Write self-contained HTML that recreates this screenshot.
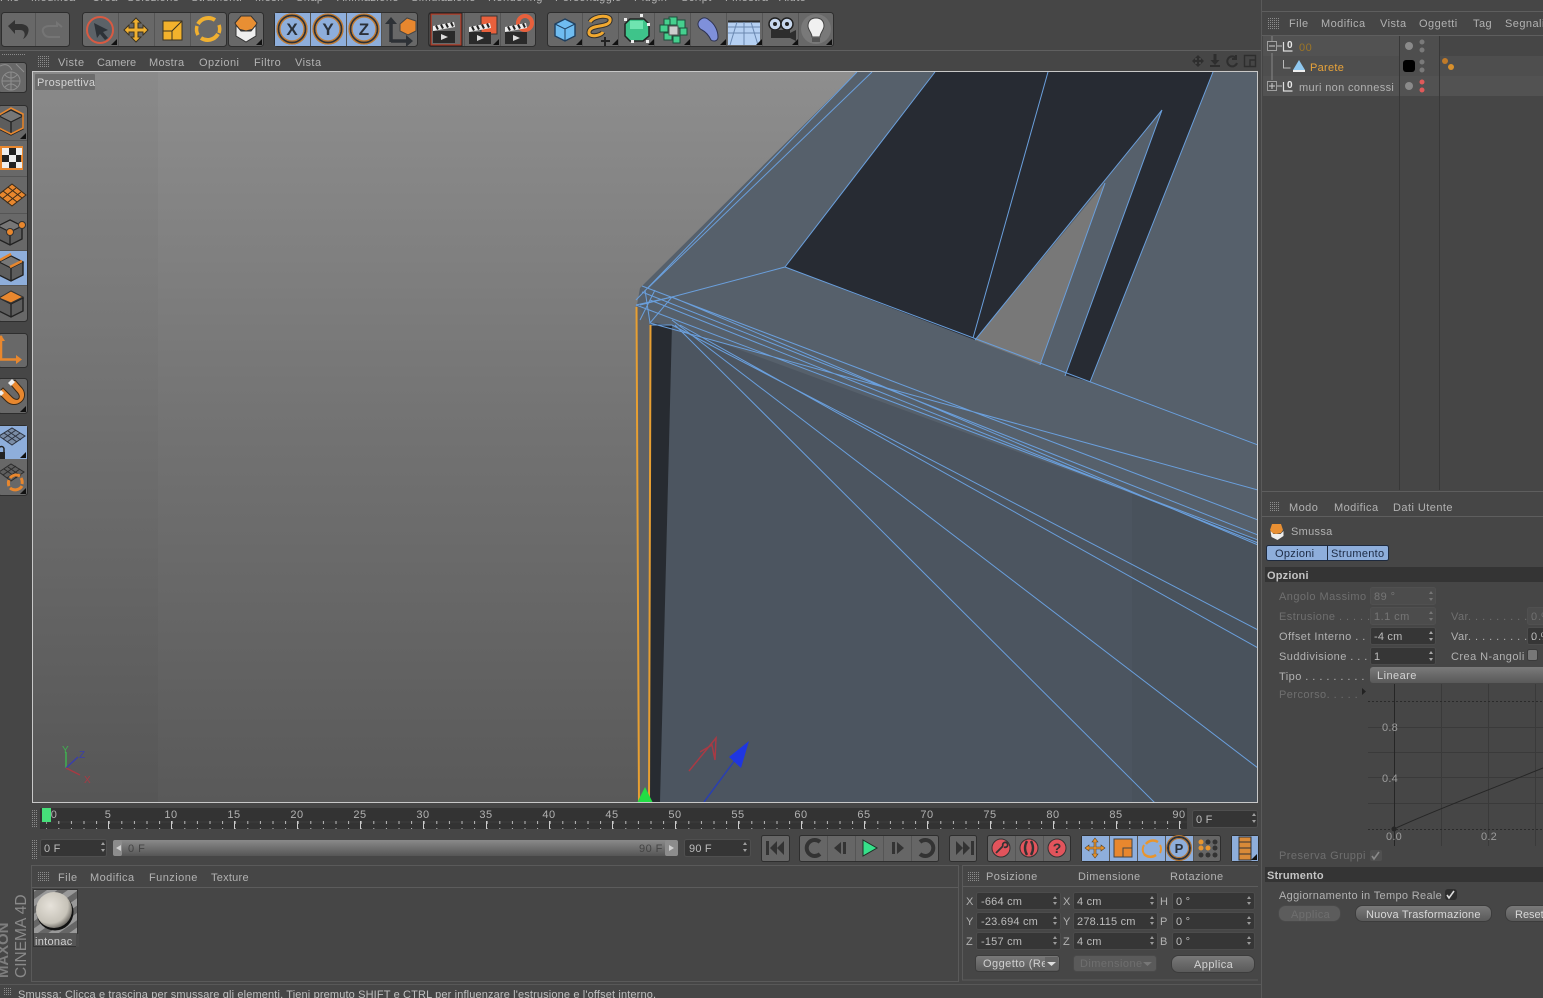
<!DOCTYPE html>
<html><head><meta charset="utf-8"><title>Cinema 4D</title>
<style>
html,body{margin:0;padding:0;background:#464646;overflow:hidden}
svg{display:block;position:absolute;left:0;top:0}
text{font-family:"Liberation Sans",sans-serif;font-size:11px;letter-spacing:.45px;fill:#b2b2b2}
.d{fill:#6f6f6f}
.b{font-weight:bold;fill:#c4c4c4;letter-spacing:.2px}
.v{fill:#bcbcbc;letter-spacing:.2px}
.o{fill:#e8a33a}
.l{fill:#1c2a44;letter-spacing:.3px}
.x{font-weight:bold;font-size:17px;fill:#2b313a;letter-spacing:0;text-anchor:middle}
</style></head><body>
<svg width="1543" height="998" viewBox="0 0 1543 998" xmlns="http://www.w3.org/2000/svg">
<defs>
<linearGradient id="sky" x1="0" y1="0" x2="0" y2="1"><stop offset="0" stop-color="#8e8e8e"/><stop offset=".5" stop-color="#727272"/><stop offset="1" stop-color="#595959"/></linearGradient>
<linearGradient id="sl" x1="0" y1="0" x2="0" y2="1"><stop offset="0" stop-color="#8a8a8a"/><stop offset="1" stop-color="#555"/></linearGradient>
<linearGradient id="btn" x1="0" y1="0" x2="0" y2="1"><stop offset="0" stop-color="#7a7a7a"/><stop offset="1" stop-color="#595959"/></linearGradient>
<radialGradient id="sph" cx=".4" cy=".38" r=".65"><stop offset="0" stop-color="#e6e2da"/><stop offset=".75" stop-color="#c6c2b8"/><stop offset="1" stop-color="#6f6c66"/></radialGradient>
<pattern id="grip" width="2" height="2" patternUnits="userSpaceOnUse"><rect width="1" height="1" fill="#8c8c8c"/></pattern>
<pattern id="t1" x="45.7" width="12.6" height="8" patternUnits="userSpaceOnUse"><rect width="1" height="4" y="4" fill="#bbb"/></pattern>
<pattern id="st" width="12" height="12" patternUnits="userSpaceOnUse" patternTransform="rotate(-35)"><rect width="12" height="12" fill="#666"/><rect width="12" height="6" fill="#999"/></pattern>
<clipPath id="vp"><rect x="33" y="72" width="1224" height="730"/></clipPath>
<g id="tri"><path d="M0-6l-6 6h6z" fill="#111"/></g>
<g id="cube"><path d="M0-12L12-6V7L0 13-12 7V-6z" fill="#5d5d5d" stroke="#222" stroke-width="1.4"/><path d="M-12-6L0 0 12-6 0-12z" fill="#777" stroke="#222" stroke-width="1.2"/><path d="M0 0V13" stroke="#222" stroke-width="1.4"/></g>
<g id="clap"><rect x="-11" y="-1" width="22" height="12" fill="#2a2a2a"/><path d="M-11-6L10-10 11-5-11-1z" fill="#eee"/><path d="M-8-6.500l2 4M-3-7.500l2 4M2-8.500l2 4M7-9.500l2 4" stroke="#222" stroke-width="2"/><path d="M-3 2l7 3-7 3z" fill="#ddd"/></g>
</defs>

<rect width="1543" height="998" fill="#464646"/>

<!-- top menu (clipped) -->
<g>
<text x="0" y="1">File</text><text x="31" y="1">Modifica</text><text x="92" y="1">Crea</text><text x="127" y="1">Selezione</text><text x="191" y="1">Strumenti</text><text x="255" y="1">Mesh</text><text x="296" y="1">Snap</text><text x="337" y="1">Animazione</text><text x="411" y="1">Simulazione</text><text x="488" y="1">Rendering</text><text x="555" y="1">Personaggio</text><text x="634" y="1">Plugin</text><text x="681" y="1">Script</text><text x="725" y="1">Finestra</text><text x="779" y="1">Aiuto</text>
</g>

<!-- top toolbar groups -->
<g stroke="#2e2e2e" fill="#686868">
<rect x="1.500" y="12.500" width="68" height="34" rx="3"/>
<rect x="82.500" y="12.500" width="144" height="34" rx="3"/>
<rect x="228.500" y="12.500" width="35" height="34" rx="3"/>
<rect x="274.500" y="12.500" width="143" height="34" rx="3"/>
<rect x="428.500" y="12.500" width="107" height="34" rx="3"/>
<rect x="547.500" y="12.500" width="286" height="34" rx="3"/>
</g>
<path d="M275 13h106v33H275z" fill="#8eaedb"/>
<path d="M35.500 13v33M118.500 13v33M154.500 13v33M190.500 13v33M310.500 13v33M346.500 13v33M381.500 13v33M464.500 13v33M500.500 13v33M582.500 13v33M618.500 13v33M654.500 13v33M690.500 13v33M726.500 13v33M762.500 13v33M798.500 13v33" stroke="#555" fill="none"/>
<!-- undo/redo -->
<path d="M8 26l7-6v4h5c7 0 10 4 8 9-1 3-3 5-5 6 2-3 2-5 1-7-1-2-3-2-5-2h-4v4z" fill="#333"/>
<path d="M62 27l-5-4v3h-7c-6 0-8 3-7 6 1 3 3 5 6 5h11" fill="none" stroke="#757575" stroke-width="2"/>
<!-- select -->
<circle cx="100" cy="30" r="13" fill="#5c6268" stroke="#d85a42" stroke-width="2"/>
<path d="M94 23l14 7-5 2 5 6-3 2-5-6-3 4z" fill="#2d3238"/>
<use href="#tri" x="117" y="45"/>
<!-- move -->
<path d="M136 18l5 5h-3v5h5v-3l5 5-5 5v-3h-5v5h3l-5 5-5-5h3v-5h-5v3l-5-5 5-5v3h5v-5h-3z" fill="#f0b030" stroke="#3a3222" stroke-width="1"/>
<!-- scale -->
<rect x="163" y="21" width="19" height="19" fill="#f3b22c" stroke="#3a3222"/><path d="M172 40V31L182 21" stroke="#3a3222" fill="none"/><path d="M163 40V31h9" stroke="#3a3222" fill="none"/>
<!-- rotate -->
<path d="M215 20a12 12 0 0 0-17 4M201 38a12 12 0 0 0 17-4" fill="none" stroke="#f0b030" stroke-width="4"/><path d="M197 26a12 12 0 0 0 1 9M219 33a12 12 0 0 0 0-8" fill="none" stroke="#f0b030" stroke-width="3.500"/>
<!-- smussa cube -->
<path d="M235 23l6-7h10l6 7-3 6-8 2-8-2z" fill="#e88f33" stroke="#333"/><path d="M236 25l5 6h10l5-6v11l-10 6-10-6z" fill="#eee" stroke="#333"/>
<use href="#tri" x="262" y="45"/>
<!-- XYZ -->
<g fill="none"><circle cx="292" cy="29" r="14" stroke="#2c3138" stroke-width="3"/><circle cx="292" cy="29" r="15" stroke="#c47c30" stroke-width="1.300"/><circle cx="292" cy="29" r="12" stroke="#c47c30" stroke-width="1.300"/>
<circle cx="328" cy="29" r="14" stroke="#2c3138" stroke-width="3"/><circle cx="328" cy="29" r="15" stroke="#c47c30" stroke-width="1.300"/><circle cx="328" cy="29" r="12" stroke="#c47c30" stroke-width="1.300"/>
<circle cx="364" cy="29" r="14" stroke="#2c3138" stroke-width="3"/><circle cx="364" cy="29" r="15" stroke="#c47c30" stroke-width="1.300"/><circle cx="364" cy="29" r="12" stroke="#c47c30" stroke-width="1.300"/></g>
<text x="292" y="35" class="x">X</text><text x="328" y="35" class="x">Y</text><text x="364" y="35" class="x">Z</text>
<!-- coord -->
<path d="M391 42V21M391 41h20" stroke="#2d3136" stroke-width="3.500" fill="none"/><path d="M385 24l6-7 6 7zM406 35l7 6-7 6z" fill="#2d3136"/><path d="M400 24l7-6 9 3v10l-8 4-8-4z" fill="#e8872e" stroke="#444"/>
<!-- clappers -->
<rect x="431" y="14" width="30" height="31" fill="none" stroke="#b03a25" stroke-width="1.500"/><rect x="430" y="13" width="32" height="33" fill="none" stroke="#222"/>
<use href="#clap" x="444" y="32"/>
<rect x="481" y="16" width="16" height="18" fill="#e8603c" stroke="#333"/><use href="#clap" x="480" y="33"/><use href="#tri" x="499" y="45"/>
<circle cx="525" cy="23" r="7" fill="none" stroke="#e8603c" stroke-width="4"/><use href="#clap" x="516" y="33"/>
<!-- blue cube -->
<path d="M565 19l10 5v12l-10 5-10-5V24z" fill="#6fbcf0" stroke="#1f3f5f" stroke-width="1.400"/><path d="M555 24l10 5 10-5M565 29v12" stroke="#1f3f5f" fill="none"/>
<use href="#tri" x="582" y="45"/>
<!-- spline -->
<path d="M590 22c4-7 22-8 20-1-2 7-20 3-21 11-1 6 12 4 14 0" fill="none" stroke="#2f2f2f" stroke-width="5"/><path d="M590 22c4-7 22-8 20-1-2 7-20 3-21 11-1 6 12 4 14 0" fill="none" stroke="#f0a830" stroke-width="3"/><path d="M601 41h9M605 37v9" stroke="#222" stroke-width="2"/>
<use href="#tri" x="618" y="45"/>
<!-- nurbs cube -->
<path d="M630 19h14l5 5v12l-6 5h-13l-5-5V24z" fill="#3ec48a" stroke="#222" stroke-width="1.500"/><path d="M630 21h13v8h-13z" fill="#6fe4b0"/><path d="M624 18h3v3h-3zM640 14h3v3h-3zM647 23h3v3h-3zM631 40h3v3h-3zM646 40h3v3h-3z" fill="#eee"/>
<use href="#tri" x="654" y="45"/>
<!-- flower -->
<g fill="#45d08e" stroke="#1d4d3a"><rect x="669" y="17" width="8" height="8"/><rect x="677" y="20" width="8" height="8"/><rect x="680" y="28" width="7" height="7"/><rect x="673" y="36" width="7" height="7"/><rect x="664" y="33" width="8" height="7"/><rect x="660" y="25" width="8" height="7"/><rect x="664" y="19" width="6" height="6"/></g><rect x="669" y="26" width="9" height="9" fill="#ccc" stroke="#555"/>
<use href="#tri" x="690" y="45"/>
<!-- nurb blue -->
<path d="M699 21c3-4 7-4 10-1 6 4 9 11 9 17 0 4-4 5-7 3-2-4-5-8-9-10-4-2-5-6-3-9z" fill="#7f90da" stroke="#2e3350"/>
<use href="#tri" x="726" y="45"/>
<!-- floor -->
<rect x="728" y="22" width="32" height="23" fill="#b5d0f2"/><path d="M728 21.500h32" stroke="#2c2c2c" stroke-width="2"/><path d="M728 27h32M728 33h32M744 22v23M737 22l-7 23M751 22l7 23" stroke="#6a88b0" fill="none"/>
<use href="#tri" x="762" y="45"/>
<!-- camera -->
<circle cx="775" cy="24" r="6" fill="#c8d8ee" stroke="#222" stroke-width="1.500"/><circle cx="787" cy="24" r="6" fill="#c8d8ee" stroke="#222" stroke-width="1.500"/><circle cx="775" cy="24" r="2" fill="#222"/><circle cx="787" cy="24" r="2" fill="#222"/><path d="M771 30h19v8h-19z" fill="#2d2d2d"/><path d="M790 33l6-3v11l-6-3z" fill="#2d2d2d"/>
<use href="#tri" x="798" y="45"/>
<!-- bulb -->
<circle cx="816" cy="29" r="15" fill="#8a8a8a" opacity=".5"/><path d="M816 18c6 0 8 4 8 8 0 4-4 7-4 11h-8c0-4-4-7-4-11 0-4 2-8 8-8z" fill="#f0f0f0" stroke="#444"/><path d="M812 38h8v4h-8z" fill="#555"/>
<use href="#tri" x="832" y="45"/>

<!-- separators -->
<path d="M0 50.500h1262" stroke="#606060"/>
<rect x="1" y="53" width="24" height="3" fill="url(#grip)"/>

<!-- left toolbar -->
<g stroke="#2e2e2e" fill="#686868">
<rect x="-2" y="62.500" width="28.500" height="30" rx="3"/>
<rect x="-2" y="105.500" width="29.500" height="216" rx="3"/>
<rect x="-2" y="333.500" width="29.500" height="34" rx="3"/>
<rect x="-2" y="378.500" width="29.500" height="35" rx="3"/>
<rect x="-2" y="425.500" width="29.500" height="70" rx="3"/>
</g>
<rect x="0" y="250" width="27" height="35" fill="#8eaedb"/><rect x="0" y="426" width="27" height="33" fill="#8eaedb"/>
<path d="M0 140.500h27M0 176.500h27M0 213.500h27M0 250.500h27M0 285.500h27" stroke="#555"/>
<!-- globe dim -->
<g fill="none" stroke="#8e8e8e"><circle cx="11" cy="81" r="9"/><path d="M2 81h18M11 72v18M5 75q6 6 12 0M5 87q6-6 12 0"/><path d="M0 66q8-4 12 4M16 64l8 8" /></g>
<!-- orange outlined cube -->
<use href="#cube" x="11" y="122"/><path d="M-1 115L11 108l12 6v14l-12 6-12-6" fill="none" stroke="#e8872e" stroke-width="1.600"/><use href="#tri" x="26" y="139"/>
<!-- checker -->
<rect x="1" y="147" width="21" height="22" fill="#222" stroke="#e8872e" stroke-width="2"/><path d="M2 148h7v7H2zM16 148h6v7h-6zM9 155h7v7H9zM2 162h7v6H2zM16 162h6v6h-6z" fill="#eee"/>
<!-- orange grid -->
<path d="M-2 195l14-11 14 11-14 11z" fill="#e8872e" stroke="#3a2a18"/><path d="M3 191l14 11M8 187l14 11M2 199l14-11M7 203l14-11" stroke="#3a2a18"/>
<!-- point cube -->
<use href="#cube" x="10" y="232"/><circle cx="10" cy="232" r="3.500" fill="#e8872e" stroke="#333"/><circle cx="22" cy="225" r="3.500" fill="#e8872e" stroke="#333"/>
<!-- edge cube -->
<use href="#cube" x="11" y="268"/><path d="M0 260l11-6M10 267l12-6" stroke="#e8872e" stroke-width="2.500"/>
<!-- face cube -->
<use href="#cube" x="11" y="304"/><path d="M-1 298L11 291l12 6-12 6z" fill="#e8872e" stroke="#333"/>
<!-- axes -->
<path d="M1 336v24M0 359.500h18" stroke="#e8872e" stroke-width="2.500" fill="none"/><path d="M16 355l6 4.500-6 4.500z" fill="#e8872e"/><path d="M-3 341l4-6 4 6z" fill="#e8872e"/>
<!-- magnet -->
<path d="M3 388l9 9c3 3 6 3 7 1 1-2 0-4-3-7l-6-7 5-4 7 8c4 5 3 11-1 14-5 4-11 3-15-1l-8-8z" fill="#e8872e" stroke="#3a2a18"/><path d="M8 383l4-4 3 3-4 4zM-2 393l3-3 3 3-3 3z" fill="#eee"/>
<use href="#tri" x="26" y="412"/>
<!-- grid lock -->
<path d="M-1 436l13-8 13 8-13 9z" fill="#7a8ca6" stroke="#2c3340"/><path d="M4 433l13 9M8 431l13 9M3 439l13-9M7 442l13-9" stroke="#2c3340"/><path d="M-2 452h7v7h-7z" fill="#222"/><path d="M-1 452v-3a2.500 2.500 0 0 1 5 0v3" fill="none" stroke="#222" stroke-width="1.500"/>
<use href="#tri" x="26" y="458"/>
<!-- grid rotate -->
<path d="M-1 472l12-8 13 8-13 9z" fill="#5e5e5e" stroke="#2c2c2c"/><path d="M4 469l13 9M8 467l13 9M3 475l13-9M7 478l13-9" stroke="#2c2c2c"/>
<path d="M20 476a8 8 0 0 0-10 2M10 488a8 8 0 0 0 12-2M9 480a8 8 0 0 0 0 6M22 484a8 8 0 0 0-1-6" fill="none" stroke="#e8872e" stroke-width="3"/>
<use href="#tri" x="26" y="494"/>

<!-- viewport header -->
<rect x="38" y="56" width="12" height="11" fill="url(#grip)"/>
<text x="58" y="66">Viste</text><text x="97" y="66" style="letter-spacing:0">Camere</text><text x="149" y="66" style="letter-spacing:.3px">Mostra</text><text x="199" y="66">Opzioni</text><text x="254" y="66">Filtro</text><text x="295" y="66">Vista</text>
<g fill="#2e2e2e"><path d="M1198 55l3 3h-2v2h2v-2l3 3-3 3v-2h-2v2h2l-3 3-3-3h2v-2h-2v2l-3-3 3-3v2h2v-2h-2z"/><path d="M1213.500 54h3v6h3l-4.500 5-4.500-5h3zM1210 65h10v2h-10z"/></g><path d="M1236 58a5 5 0 1 0 1 5M1236 55v4h-4" fill="none" stroke="#2e2e2e" stroke-width="2"/><path d="M1244.500 55.500h11v11h-11zM1250 66v-6h6" fill="none" stroke="#2e2e2e" stroke-width="1.400"/>

<!-- viewport -->
<rect x="32" y="71" width="1226" height="732" fill="#c8c8c8"/>
<g clip-path="url(#vp)">
<rect x="33" y="72" width="1224" height="730" fill="url(#sky)"/>
<rect x="33" y="72" width="125" height="730" fill="#000" opacity=".025"/>
<!-- faces -->
<polygon points="857,72 1258,72 1258,803 640,803 637,305 640,288" fill="#56606b"/>
<polygon points="672,325 1258,540 1258,803 660,803" fill="#4c5560"/>
<polygon points="935,72 1213,72 1090,382 1065,375 1162,110 975,340 785,267" fill="#272b33"/>
<polygon points="975,340 1105,183 1040,365" fill="#787878"/>
<polygon points="1105,183 1162,110 1065,376 1040,365" fill="#56606b"/>
<polygon points="650,323 672,325 660,803 650,803" fill="#272b31"/>
<polygon points="637,305 650,323 650,803 640,803" fill="#606265"/>
<polygon points="1132,494 1258,540 1258,803 1132,803" fill="#000" opacity=".035"/>
<!-- wire -->
<g stroke="#6a9fdc" stroke-width="1" fill="none">
<path d="M857 72L636 300M872 72L648 288M935 72L785 267M785 267L672 297L636 305"/>
<path d="M785 267L1258 445M1048 72L973 338M1162 110L975 340M1105 183L1040 365M1162 110L1065 376M1213 72L1090 382"/>
<path d="M642 286L1258 520M642 292L1258 535M650 300L1258 543M636 305L1258 540M650 323L1258 490M672 297L1258 545"/>
<path d="M645 290L650 323L672 297L640 305M655 290L640 320"/>
<path d="M672 325L1258 630M680 325L1258 648M672 320L1258 768M675 325L1155 803"/>
<path d="M650 325H672"/>
</g>
<path d="M636.500 307L639 803M650.500 325L649 803" stroke="#e79f32" stroke-width="2" fill="none"/>
<!-- gizmos -->
<path d="M689 771L716 738 715 760 712 745 700 752" fill="none" stroke="#a83a44" stroke-width="1.500"/>
<path d="M704 802L738 756" stroke="#2a3fb0" stroke-width="1.500"/><path d="M749 741L741 768 729 757z" fill="#1f36e0"/>
<path d="M645 787L653 803H637z" fill="#22dd44"/>
<path d="M66 768V752" stroke="#40b050" stroke-width="1.500"/><path d="M66 768L78 757" stroke="#3a3fa8" stroke-width="1.500"/><path d="M66 768L80 775" stroke="#a83a44" stroke-width="1.500"/>
<text x="62" y="753" style="fill:#40b050;font-size:10px;letter-spacing:0">Y</text><text x="79" y="758" style="fill:#3a3fa8;font-size:10px;letter-spacing:0">Z</text><text x="84" y="783" style="fill:#a83a44;font-size:10px;letter-spacing:0">X</text>
</g>
<rect x="35" y="74" width="60" height="16" rx="1" fill="#6c6c6c"/>
<text x="37" y="86" style="fill:#d4d4d4;letter-spacing:.3px">Prospettiva</text>

<!-- timeline -->
<rect x="32" y="809" width="5" height="19" fill="url(#grip)"/>
<rect x="40" y="808" width="1147" height="21" fill="#333"/>
<path d="M40 822h1147" stroke="#3c3c3c"/>
<rect x="46" y="821" width="1140" height="8" fill="url(#t1)"/>
<path d="M108.500 821v8M171.500 821v8M234.500 821v8M297.500 821v8M360.500 821v8M423.500 821v8M486.500 821v8M549.500 821v8M612.500 821v8M675.500 821v8M738.500 821v8M801.500 821v8M864.500 821v8M927.500 821v8M990.500 821v8M1053.500 821v8M1116.500 821v8M1179.500 821v8" stroke="#ccc"/>
<rect x="42" y="808" width="9" height="14" fill="#46e07a"/>
<g>
<text x="54" y="818" text-anchor="middle">0</text><text x="108" y="818" text-anchor="middle">5</text><text x="171" y="818" text-anchor="middle">10</text><text x="234" y="818" text-anchor="middle">15</text><text x="297" y="818" text-anchor="middle">20</text><text x="360" y="818" text-anchor="middle">25</text><text x="423" y="818" text-anchor="middle">30</text><text x="486" y="818" text-anchor="middle">35</text><text x="549" y="818" text-anchor="middle">40</text><text x="612" y="818" text-anchor="middle">45</text><text x="675" y="818" text-anchor="middle">50</text><text x="738" y="818" text-anchor="middle">55</text><text x="801" y="818" text-anchor="middle">60</text><text x="864" y="818" text-anchor="middle">65</text><text x="927" y="818" text-anchor="middle">70</text><text x="990" y="818" text-anchor="middle">75</text><text x="1053" y="818" text-anchor="middle">80</text><text x="1116" y="818" text-anchor="middle">85</text><text x="1179" y="818" text-anchor="middle">90</text>
</g>
<!-- fields row -->
<g fill="#353535" stroke="#4f4f4f">
<rect x="1192.500" y="810.500" width="65" height="17" rx="2"/>
<rect x="40.500" y="839.500" width="66" height="17" rx="2"/>
<rect x="684.500" y="839.500" width="66" height="17" rx="2"/>
</g>
<text x="1196" y="823" class="v">0 F</text><text x="44" y="852" class="v">0 F</text><text x="689" y="852" class="v">90 F</text>
<path d="M1252 816l2-3 2 3zM1252 820l2 3 2-3zM101 845l2-3 2 3zM101 849l2 3 2-3zM743 845l2-3 2 3zM743 849l2 3 2-3z" fill="#a0a0a0"/>
<rect x="32" y="839" width="5" height="20" fill="url(#grip)"/>
<rect x="113" y="840" width="565" height="16" rx="3" fill="url(#sl)"/>
<rect x="113" y="840" width="9" height="16" rx="2" fill="#8c8c8c"/><rect x="665" y="840" width="13" height="16" rx="2" fill="#8c8c8c"/>
<path d="M116 848l5-3v6zM674 848l-5-3v6z" fill="#d0d0d0"/>
<text x="128" y="852" style="fill:#444">0 F</text><text x="639" y="852" style="fill:#444">90 F</text>
<!-- transport -->
<g stroke="#2e2e2e" fill="#666">
<rect x="761.500" y="835.500" width="28" height="26" rx="2"/>
<rect x="799.500" y="835.500" width="139" height="26" rx="2"/>
<rect x="949.500" y="835.500" width="27" height="26" rx="2"/>
<rect x="987.500" y="835.500" width="83" height="26" rx="2"/>
<rect x="1081.500" y="835.500" width="139" height="26" rx="2"/>
<rect x="1231.500" y="835.500" width="27" height="26" rx="2"/>
</g>
<rect x="1082" y="836" width="111" height="25" fill="#8eaedb"/><rect x="1232" y="836" width="26" height="25" fill="#8eaedb"/>
<path d="M827.500 836v25M855.500 836v25M883.500 836v25M911.500 836v25M1015.500 836v25M1043.500 836v25M1109.500 836v25M1137.500 836v25M1165.500 836v25M1193.500 836v25" stroke="#555"/>
<path d="M766 841h3v14h-3zM770 848l7-7v14zM777 848l7-7v14z" fill="#333"/>
<path d="M820 842a8 8 0 1 0 0 12" fill="none" stroke="#333" stroke-width="4"/>
<path d="M841 842l-7 6 7 6zM843 842h3v12h-3z" fill="#333"/>
<path d="M863 840l14 8-14 8z" fill="#36e08a" stroke="#1d2d24"/>
<path d="M892 842h3v12h-3zM897 842l7 6-7 6z" fill="#333"/>
<path d="M920 842a8 8 0 1 1 0 12" fill="none" stroke="#333" stroke-width="4"/>
<path d="M971 841h3v14h-3zM956 841l7 7-7 7zM963 841l7 7-7 7z" fill="#333"/>
<g fill="#e2545c" stroke="#333"><circle cx="1001" cy="848" r="9"/><circle cx="1029" cy="848" r="9"/><circle cx="1057" cy="848" r="9"/></g>
<path d="M998 851l5-5M996 853l3-3M1003 846a2.500 2.500 0 1 1 1 1" fill="none" stroke="#333" stroke-width="1.800"/>
<path d="M1027 841q-4 7 0 14M1031 841q4 7 0 14" fill="none" stroke="#333" stroke-width="2.400"/>
<text x="1057" y="853" style="font-weight:bold;font-size:14px;fill:#333;letter-spacing:0" text-anchor="middle">?</text>
<path d="M1095 838l3 4h-2v5h5v-2l4 3-4 3v-2h-5v5h2l-3 4-3-4h2v-5h-5v2l-4-3 4-3v2h5v-5h-2z" fill="#e8952e" stroke="#5a4020" stroke-width=".6"/>
<rect x="1114" y="839" width="18" height="18" fill="#e8872e" stroke="#444"/><path d="M1123 857v-9h9" fill="none" stroke="#444"/>
<path d="M1158 842a9 9 0 0 0-12 2M1144 854a9 9 0 0 0 12 1" fill="none" stroke="#e8952e" stroke-width="2.500"/><path d="M1144 845a9 9 0 0 0 0 9M1160 853a9 9 0 0 0 0-8" fill="none" stroke="#e8952e" stroke-width="2"/>
<circle cx="1179" cy="848" r="11" fill="none" stroke="#2c3138" stroke-width="2"/><circle cx="1179" cy="848" r="12.500" fill="none" stroke="#b8742c"/><circle cx="1179" cy="848" r="9.500" fill="none" stroke="#b8742c"/>
<text x="1179" y="853" style="font-weight:bold;font-size:13px;fill:#2b313a;letter-spacing:0" text-anchor="middle">P</text>
<g fill="#333"><circle cx="1201" cy="842" r="2.500" fill="#e8952e"/><circle cx="1208" cy="842" r="2.500"/><circle cx="1215" cy="842" r="2.500"/><circle cx="1201" cy="848" r="2.500" fill="#e8952e"/><circle cx="1208" cy="848" r="2.500" fill="#e8952e"/><circle cx="1215" cy="848" r="2.500"/><circle cx="1201" cy="855" r="2.500"/><circle cx="1208" cy="855" r="2.500"/><circle cx="1215" cy="855" r="2.500"/></g>
<rect x="1239" y="837" width="12" height="23" fill="#d98a38" stroke="#333"/><path d="M1239 842h12M1239 848h12M1239 854h12" stroke="#333"/><use href="#tri" x="1257" y="860"/>

<!-- material panel -->
<path d="M31.500 865.500H958.500V981.500H31.500z" fill="none" stroke="#5a5a5a"/>
<path d="M32 887.500h926" stroke="#5c5c5c"/>
<rect x="38" y="871" width="11" height="11" fill="url(#grip)"/>
<text x="58" y="881">File</text><text x="90" y="881">Modifica</text><text x="149" y="881">Funzione</text><text x="211" y="881" style="letter-spacing:.25px">Texture</text>
<rect x="33.500" y="889.500" width="44" height="57" fill="#555" stroke="#333"/>
<rect x="34" y="890" width="43" height="43" fill="url(#st)"/>
<circle cx="55" cy="912" r="18.500" fill="#111"/><circle cx="54" cy="910" r="18" fill="url(#sph)"/>
<text x="35" y="945" style="fill:#cfcfcf;letter-spacing:.3px">intonac</text>
<rect x="76" y="934" width="3" height="13" fill="#4a4a4a"/>
<!-- logo -->
<text transform="translate(26,978) rotate(-90)" style="fill:#8a8a8a;font-size:15.500px;letter-spacing:0">CINEMA 4D</text>
<text transform="translate(8,978) rotate(-90)" style="fill:#7e7e7e;font-size:15px;font-weight:bold;letter-spacing:-.1px">MAXON</text>

<!-- coords panel -->
<path d="M962.500 865V980H1258" fill="none" stroke="#5a5a5a"/><path d="M963 865.500h295M963 886.500h295" stroke="#5c5c5c"/>
<rect x="968" y="871" width="11" height="11" fill="url(#grip)"/>
<text x="986" y="880">Posizione</text><text x="1078" y="880">Dimensione</text><text x="1170" y="880">Rotazione</text>
<g fill="#363636" stroke="#4c4c4c">
<rect x="976.500" y="892.500" width="84" height="17" rx="2"/><rect x="1073.500" y="892.500" width="84" height="17" rx="2"/><rect x="1172.500" y="892.500" width="82" height="17" rx="2"/>
<rect x="976.500" y="912.500" width="84" height="17" rx="2"/><rect x="1073.500" y="912.500" width="84" height="17" rx="2"/><rect x="1172.500" y="912.500" width="82" height="17" rx="2"/>
<rect x="976.500" y="932.500" width="84" height="17" rx="2"/><rect x="1073.500" y="932.500" width="84" height="17" rx="2"/><rect x="1172.500" y="932.500" width="82" height="17" rx="2"/>
</g>
<path d="M1053 899l2-3 2 3zM1053 902l2 3 2-3zM1150 899l2-3 2 3zM1150 902l2 3 2-3zM1247 899l2-3 2 3zM1247 902l2 3 2-3zM1053 919l2-3 2 3zM1053 922l2 3 2-3zM1150 919l2-3 2 3zM1150 922l2 3 2-3zM1247 919l2-3 2 3zM1247 922l2 3 2-3zM1053 939l2-3 2 3zM1053 942l2 3 2-3zM1150 939l2-3 2 3zM1150 942l2 3 2-3zM1247 939l2-3 2 3zM1247 942l2 3 2-3z" fill="#9a9a9a"/>
<text x="966" y="905">X</text><text x="966" y="925">Y</text><text x="966" y="945">Z</text><text x="1063" y="905">X</text><text x="1063" y="925">Y</text><text x="1063" y="945">Z</text><text x="1160" y="905">H</text><text x="1160" y="925">P</text><text x="1160" y="945">B</text>
<text x="981" y="905" class="v">-664 cm</text><text x="981" y="925" class="v">-23.694 cm</text><text x="981" y="945" class="v">-157 cm</text>
<text x="1077" y="905" class="v">4 cm</text><text x="1077" y="925" class="v">278.115 cm</text><text x="1077" y="945" class="v">4 cm</text>
<text x="1176" y="905" class="v">0 °</text><text x="1176" y="925" class="v">0 °</text><text x="1176" y="945" class="v">0 °</text>
<rect x="975.500" y="955.500" width="84" height="16" rx="3" fill="url(#btn)" stroke="#3c3c3c"/>
<rect x="1073.500" y="955.500" width="83" height="16" rx="3" fill="#5a5a5a" stroke="#4a4a4a"/>
<rect x="1171.500" y="955.500" width="83" height="17" rx="7" fill="url(#btn)" stroke="#3c3c3c"/>
<text x="983" y="967" style="fill:#d0d0d0">Oggetto (Re</text><rect x="1045" y="957" width="13" height="13" fill="#646464"/><path d="M1047 962h9l-4.500 4z" fill="#ddd"/>
<text x="1080" y="967" class="d">Dimensione</text><path d="M1143 962h9l-4.500 4z" fill="#777"/>
<text x="1194" y="968" style="fill:#d4d4d4">Applica</text>

<!-- status -->
<path d="M0 984.500h1262" stroke="#585858"/>
<rect x="3" y="988" width="8" height="8" fill="url(#grip)"/>
<text x="18" y="998" style="fill:#c0c0c0;letter-spacing:.14px;font-size:11px">Smussa: Clicca e trascina per smussare gli elementi. Tieni premuto SHIFT e CTRL per influenzare l'estrusione e l'offset interno.</text>

<!-- right column -->
<path d="M1261.500 0V998" stroke="#5a5a5a"/>
<path d="M1262 11.500h281M1262 35.500h281" stroke="#5e5e5e"/>
<rect x="1268" y="17" width="12" height="12" fill="url(#grip)"/>
<text x="1289" y="27">File</text><text x="1321" y="27">Modifica</text><text x="1380" y="27">Vista</text><text x="1419" y="27">Oggetti</text><text x="1473" y="27">Tag</text><text x="1505" y="27">Segnali</text>
<rect x="1263" y="36" width="136" height="20" fill="#525252"/>
<rect x="1263" y="56" width="136" height="20" fill="#4e4e4e"/>
<rect x="1263" y="76" width="280" height="20" fill="#525252"/>
<rect x="1400" y="36" width="39" height="40" fill="#4e4e4e"/>
<rect x="1440" y="56" width="103" height="20" fill="#4e4e4e"/>
<path d="M1399.500 36V490M1439.500 36V490" stroke="#383838"/>
<path d="M1272 36v10M1272 53V80" stroke="#888" fill="none"/>
<rect x="1267.500" y="41.500" width="9" height="9" fill="#4e4e4e" stroke="#a0a0a0"/><path d="M1269 46h6" stroke="#ccc"/>
<rect x="1267.500" y="81.500" width="9" height="9" fill="#4e4e4e" stroke="#a0a0a0"/><path d="M1269 86h6M1272 83v6" stroke="#ccc"/>
<path d="M1277 46h5M1277 86h5M1283.500 60v8h7" stroke="#bbb" fill="none"/>
<path d="M1283.500 42v9h9M1283.500 82v9h9" stroke="#ddd" fill="none" stroke-width="1.200"/>
<text x="1287" y="48" style="fill:#e8e8e8;font-size:10px;letter-spacing:0;font-weight:bold">0</text><text x="1287" y="88" style="fill:#e8e8e8;font-size:10px;letter-spacing:0;font-weight:bold">0</text>
<text x="1299" y="51" style="fill:#9c7526">00</text>
<path d="M1299 60l6 10h-12z" fill="#8fc8f0"/><path d="M1293 71h12" stroke="#eee" stroke-width="2"/>
<text x="1310" y="71" class="o" style="letter-spacing:.3px">Parete</text>
<text x="1299" y="91" style="letter-spacing:.35px">muri non connessi</text>
<circle cx="1409" cy="46" r="4" fill="#8a8a8a"/><circle cx="1409" cy="86" r="4" fill="#8a8a8a"/><rect x="1403" y="60" width="12" height="12" rx="3" fill="#000"/>
<circle cx="1422" cy="42" r="2.500" fill="#7a7a7a"/><circle cx="1422" cy="50" r="2.500" fill="#7a7a7a"/><circle cx="1422" cy="62" r="2.500" fill="#7a7a7a"/><circle cx="1422" cy="70" r="2.500" fill="#7a7a7a"/><circle cx="1422" cy="82" r="2.500" fill="#e05a5a"/><circle cx="1422" cy="90" r="2.500" fill="#e05a5a"/>
<circle cx="1445" cy="61" r="3" fill="#c07a28"/><circle cx="1451" cy="67" r="3" fill="#d8902c"/>

<!-- attributes -->
<path d="M1262 491.500h281M1262 516.500h281" stroke="#5e5e5e"/>
<rect x="1269" y="501" width="11" height="11" fill="url(#grip)"/>
<text x="1289" y="511">Modo</text><text x="1334" y="511">Modifica</text><text x="1393" y="511">Dati Utente</text>
<path d="M1270 530l2-6h9l2 6-2 3-5 1-4-1z" fill="#e88f33"/><path d="M1270.500 531l3 3h7l3-3v5l-6 4-6-3z" fill="#eee"/>
<text x="1291" y="535" style="letter-spacing:.3px">Smussa</text>
<rect x="1266.500" y="545.500" width="122" height="15" rx="2" fill="#8eaedb" stroke="#1e2a3e"/><path d="M1327.500 546v15" stroke="#1e2a3e"/>
<text x="1275" y="557" class="l">Opzioni</text><text x="1331" y="557" class="l">Strumento</text>
<rect x="1265" y="567" width="278" height="15" fill="#343434"/>
<text x="1267" y="579" class="b">Opzioni</text>
<text x="1279" y="600" class="d">Angolo Massimo</text>
<text x="1279" y="620" class="d">Estrusione . . . . .</text>
<text x="1279" y="640">Offset Interno . .</text>
<text x="1279" y="660">Suddivisione . . .</text>
<text x="1279" y="680">Tipo  . . . . . . . . .</text>
<text x="1279" y="698" class="d">Percorso. . . . .</text>
<rect x="1370.500" y="587.500" width="65" height="17" rx="2" fill="#4c4c4c" stroke="#505050"/>
<rect x="1370.500" y="607.500" width="65" height="17" rx="2" fill="#4c4c4c" stroke="#505050"/>
<rect x="1370.500" y="627.500" width="65" height="17" rx="2" fill="#363636" stroke="#4c4c4c"/>
<rect x="1370.500" y="647.500" width="65" height="17" rx="2" fill="#363636" stroke="#4c4c4c"/>
<rect x="1527.500" y="607.500" width="30" height="17" rx="2" fill="#4c4c4c" stroke="#505050"/>
<rect x="1527.500" y="627.500" width="30" height="17" rx="2" fill="#363636" stroke="#4c4c4c"/>
<text x="1374" y="600" class="d" style="fill:#767676">89 °</text><text x="1374" y="620" class="d" style="fill:#767676">1.1 cm</text><text x="1374" y="640" class="v">-4 cm</text><text x="1374" y="660" class="v">1</text>
<path d="M1429 594l2-3 2 3zM1429 598l2 3 2-3zM1429 614l2-3 2 3zM1429 618l2 3 2-3z" fill="#757575"/><path d="M1429 634l2-3 2 3zM1429 638l2 3 2-3zM1429 654l2-3 2 3zM1429 658l2 3 2-3z" fill="#a8a8a8"/>
<text x="1451" y="620" class="d">Var. . . . . . . . . . .</text><text x="1451" y="640">Var. . . . . . . . . . .</text><text x="1451" y="660">Crea N-angoli</text>
<text x="1531" y="620" class="d">0 %</text><text x="1531" y="640" class="v">0 %</text>
<rect x="1527.500" y="649.500" width="10" height="11" rx="2" fill="#777" stroke="#3a3a3a"/>
<rect x="1370" y="667" width="180" height="16" rx="3" fill="url(#btn)"/>
<text x="1377" y="679" style="fill:#d4d4d4">Lineare</text>
<path d="M1362 688l4 3.500-4 3.500z" fill="#222"/>
<!-- graph -->
<path d="M1368 727.500h175M1368 752.500h175M1368 777.500h175M1368 803.500h175M1441.500 684V846M1488.500 684V846M1535.500 684V846" stroke="#3a3a3a" fill="none"/>
<path d="M1368 701.500h175M1368 829.500h175" stroke="#2a2a2a" stroke-dasharray="2 2" fill="none"/>
<path d="M1394.500 684V846" stroke="#262626"/>
<path d="M1394 829C1430 812 1489 790 1543 768" stroke="#262626" fill="none"/>
<circle cx="1394" cy="829" r="2.500" fill="#262626"/>
<text x="1382" y="731" style="fill:#9c9c9c;letter-spacing:.2px">0.8</text><text x="1382" y="782" style="fill:#9c9c9c;letter-spacing:.2px">0.4</text><text x="1386" y="840" style="fill:#9c9c9c;letter-spacing:.2px">0.0</text><text x="1481" y="840" style="fill:#9c9c9c;letter-spacing:.2px">0.2</text>
<text x="1279" y="859" class="d">Preserva Gruppi</text>
<rect x="1370" y="850" width="12" height="11" rx="2" fill="#505050"/><path d="M1372 856l2 3 5-7" fill="none" stroke="#8a8a8a" stroke-width="1.600"/>
<rect x="1265" y="867" width="278" height="15" fill="#343434"/>
<text x="1267" y="879" class="b">Strumento</text>
<text x="1279" y="899" style="letter-spacing:.33px">Aggiornamento in Tempo Reale</text>
<rect x="1445" y="889" width="12" height="11" rx="3" fill="#2e2e2e"/><path d="M1447 895l2 3 5-7" fill="none" stroke="#ddd" stroke-width="1.600"/>
<rect x="1278.500" y="905.500" width="62" height="16" rx="7" fill="#5c5c5c" stroke="#4a4a4a"/>
<text x="1291" y="918" class="d">Applica</text>
<rect x="1355.500" y="905.500" width="136" height="16" rx="7" fill="url(#btn)" stroke="#3c3c3c"/>
<text x="1366" y="918" style="fill:#d8d8d8;letter-spacing:.2px">Nuova Trasformazione</text>
<rect x="1505.500" y="905.500" width="60" height="16" rx="7" fill="url(#btn)" stroke="#3c3c3c"/>
<text x="1515" y="918" style="fill:#d8d8d8;letter-spacing:0">Reset</text>
</svg>
</body></html>
